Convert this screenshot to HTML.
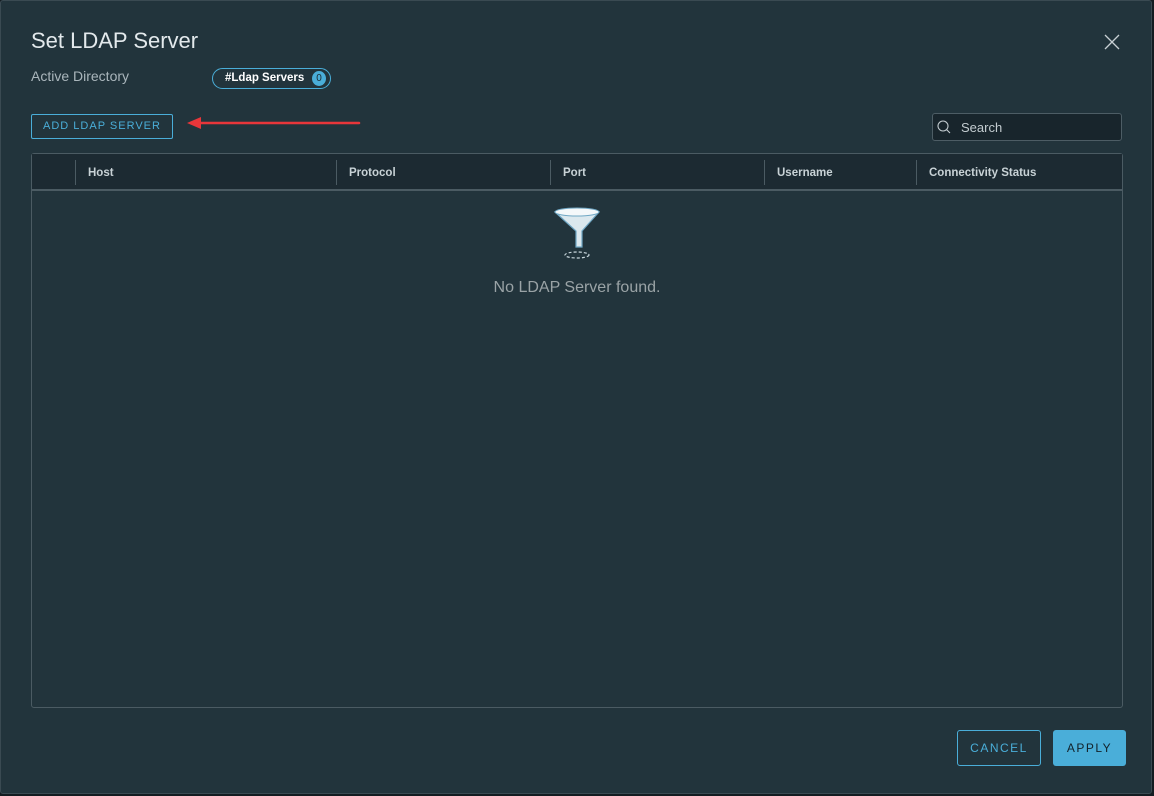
<!DOCTYPE html>
<html><head><style>
*{margin:0;padding:0;box-sizing:border-box}
body{width:1154px;height:796px;background:#131c21;font-family:"Liberation Sans",sans-serif;position:relative;overflow:hidden}
.dlg{position:absolute;left:0;top:0;width:1152px;height:794px;background:#22343c;border:1px solid #3a4a52;border-radius:3px}
.a{position:absolute}
.title{left:31px;top:28px;font-size:22px;color:#e3e9ec}
.sub{left:31px;top:68px;font-size:14px;color:#aab6bc}
.pill{left:212px;top:68px;width:119px;height:21px;border:1px solid #4aaed9;border-radius:11px;color:#fff;font-size:11.5px;font-weight:bold;padding:3px 0 0 12px}
.pill span{position:absolute;right:4px;top:2px;width:14px;height:15px;border-radius:50%;background:#4aaed9;color:#1b2a31;font-size:10px;text-align:center;line-height:15px;font-weight:normal}
.btn1{left:31px;top:114px;width:142px;height:25px;border:1px solid #4aaed9;border-radius:2px;color:#4aaed9;font-size:11px;letter-spacing:1px;text-align:center;line-height:23px}
.search{left:932px;top:113px;width:190px;height:28px;background:#18252c;border:1px solid #4d5d65;border-radius:3px;color:#c3ccd0;font-size:13px;padding:6px 0 0 28px}
.tbl{left:31px;top:153px;width:1092px;height:555px;border:1px solid #4b5b63;border-radius:3px}
.hdr{position:absolute;left:0;top:0;right:0;height:37px;background:#1c2a32;border-bottom:2px solid #4b5b63}
.hdr div{position:absolute;top:6px;height:25px;border-left:1px solid #4b5b63;color:#c8d2d6;font-size:11.5px;font-weight:bold;padding:7px 0 0 12px}
.empty{left:0;width:1154px;top:279px;text-align:center;color:#9aa3a6;font-size:16px}
.cancel{left:957px;top:730px;width:84px;height:36px;border:1px solid #4aaed9;border-radius:3px;color:#4aaed9;font-size:12px;letter-spacing:1.5px;text-align:center;line-height:35px}
.apply{left:1053px;top:730px;width:73px;height:36px;background:#4aaed9;border-radius:3px;color:#13222a;font-size:12px;letter-spacing:1.5px;text-align:center;line-height:37px}
</style></head><body>
<div class="dlg"></div>
<div class="a title">Set LDAP Server</div>
<svg class="a" style="left:1104px;top:34px" width="16" height="16"><path d="M1 1L15 15M15 1L1 15" stroke="#c8d0d4" stroke-width="1.3"/></svg>
<div class="a sub">Active Directory</div>
<div class="a pill">#Ldap Servers<span>0</span></div>
<div class="a btn1">ADD LDAP SERVER</div>
<svg class="a" style="left:185px;top:115px" width="180" height="16"><path d="M14 8H174" stroke="#e8363a" stroke-width="2.5" stroke-linecap="round"/><path d="M2 8L16 2L16 14Z" fill="#e8363a"/></svg>
<div class="a search">Search</div>
<svg class="a" style="left:936px;top:119px" width="18" height="18"><circle cx="7" cy="7" r="5" fill="none" stroke="#c3ccd0" stroke-width="1.1"/><path d="M10.5 10.5L14 14" stroke="#c3ccd0" stroke-width="1.1"/></svg>
<div class="a tbl"><div class="hdr">
<div style="left:43px">Host</div><div style="left:304px">Protocol</div><div style="left:518px">Port</div><div style="left:732px">Username</div><div style="left:884px">Connectivity Status</div>
</div></div>
<svg class="a" style="left:552px;top:205px" width="50" height="58">
<path d="M3 7 Q25 1 47 7 L30 26 L30 42 L24 42 L24 26 Z" fill="#dbe8ee" stroke="#6fa7c4" stroke-width="1.2"/>
<ellipse cx="25" cy="7" rx="22" ry="4" fill="#f4f8fa" stroke="#6fa7c4" stroke-width="1"/>
<ellipse cx="25" cy="50" rx="12" ry="3" fill="none" stroke="#c8d6dc" stroke-width="1.2" stroke-dasharray="3 2"/>
</svg>
<div class="a empty">No LDAP Server found.</div>
<div class="a cancel">CANCEL</div>
<div class="a apply">APPLY</div>
</body></html>
